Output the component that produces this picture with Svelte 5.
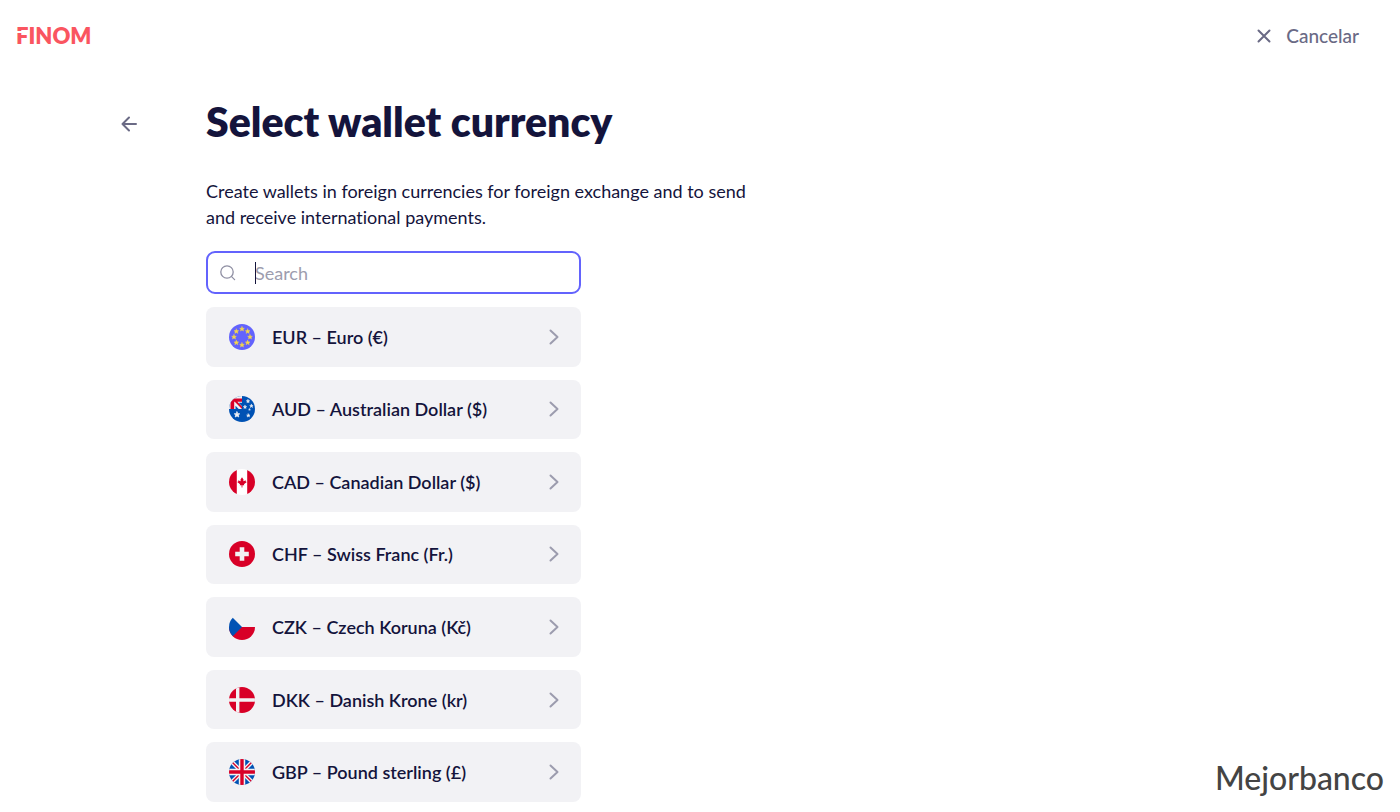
<script lang="ts">
	type Currency = { code: string; name: string; sign: string }

	const currencies: Currency[] = [
		{ code: 'EUR', name: 'Euro', sign: '€' },
		{ code: 'AUD', name: 'Australian Dollar', sign: '$' },
		{ code: 'CAD', name: 'Canadian Dollar', sign: '$' },
		{ code: 'CHF', name: 'Swiss Franc', sign: 'Fr.' },
		{ code: 'CZK', name: 'Czech Koruna', sign: 'Kč' },
		{ code: 'DKK', name: 'Danish Krone', sign: 'kr' },
		{ code: 'GBP', name: 'Pound sterling', sign: '£' }
	]

	const star = '0,-1.7 0.5,-0.6 1.7,-0.5 0.8,0.3 1.1,1.5 0,0.8 -1.1,1.5 -0.8,0.3 -1.7,-0.5 -0.5,-0.6'

	let search = $state('')

	let filtered = $derived(
		currencies.filter((c) => `${c.code} ${c.name}`.toLowerCase().includes(search.toLowerCase()))
	)
</script>

<div class="page">
	<header>
		<a class="logo" href="/">FINOM</a>
		<button class="cancel">
			<svg width="14" height="14" viewBox="0 0 14 14">
				<path d="M1.5 1.5l11 11M12.5 1.5l-11 11" />
			</svg>
			Cancelar
		</button>
	</header>

	<main>
		<button class="back" aria-label="Back">
			<svg width="16" height="16" viewBox="0 0 16 16">
				<path d="M15 8H1.5M8 1.5L1.5 8L8 14.5" />
			</svg>
		</button>

		<div class="content">
			<h1>Select wallet currency</h1>
			<p>Create wallets in foreign currencies for foreign exchange and to send and receive international payments.</p>

			<label class="search">
				<svg width="16" height="16" viewBox="0 0 16 16">
					<circle cx="7" cy="7" r="6.2" />
					<path d="M11.6 11.6l3 3" />
				</svg>
				<input type="text" placeholder="Search" aria-label="Search" bind:value={search} />
				{#if !search}
					<span class="caret"></span>
				{/if}
			</label>

			<ul>
				{#each filtered as currency (currency.code)}
					<li>
						<button class="currency">
							<svg class="flag" width="26" height="26" viewBox="0 0 26 26">
								{#if currency.code === 'EUR'}
									<rect width="26" height="26" fill="#6363fd" />
									{#each [0, 45, 90, 135, 180, 225, 270, 315] as angle}
										<g transform="rotate({angle} 13 13) translate(13 5) rotate({-angle}) scale(1.4)">
											<polygon points={star} fill="#f8d84a" stroke="#f8d84a" stroke-width=".3" />
										</g>
									{/each}
								{:else if currency.code === 'AUD'}
									<rect width="26" height="26" fill="#0052b4" />
									<path d="M0 0h13v13H0z" fill="#f2f2f4" />
									<path d="M1.5 13V2.5H13v3.2H5.2V13zM5 5h2.6l5.4 5.6V13z" fill="#d80027" />
									<path d="M9.6 6.8H13v3.4z" fill="#0052b4" />
									<path d="M6.5 9.8V13h3.2z" fill="#0052b4" />
									<g fill="#f2f2f4" stroke="#f2f2f4" stroke-width=".5">
										<g transform="translate(8 18.6) scale(1.6)"><polygon points={star} /></g>
										<g transform="translate(19 5.2)"><polygon points={star} /></g>
										<g transform="translate(16 11)"><polygon points={star} /></g>
										<g transform="translate(22.4 10)"><polygon points={star} /></g>
										<g transform="translate(20.5 13.6) scale(.6)"><polygon points={star} /></g>
										<g transform="translate(19.3 19.5)"><polygon points={star} /></g>
									</g>
								{:else if currency.code === 'CAD'}
									<rect width="26" height="26" fill="#fff" />
									<path d="M0 0h7.8v26H0zM18.2 0H26v26h-7.8z" fill="#d80027" />
									<path
										d="M13 8.3l1.6 2.4-.4 1.6 1.6-.5.9-.6v1.3l1.1.5-2.9 2.3.4.9h-1.9V18.4h-.8v-2.2h-1.9l.4-.9-2.9-2.3 1.1-.5v-1.3l.9.6 1.6.5-.4-1.6z"
										fill="#d80027"
									/>
								{:else if currency.code === 'CHF'}
									<rect width="26" height="26" fill="#d80027" />
									<path d="M10.7 6.2h4.6v4.5h4.5v4.6h-4.5v4.5h-4.6v-4.5H6.2v-4.6h4.5z" fill="#f2f2f4" />
								{:else if currency.code === 'CZK'}
									<rect width="26" height="13" fill="#f2f2f4" />
									<rect y="13" width="26" height="13" fill="#d80027" />
									<path d="M0 0L13 13L0 26z" fill="#0052b4" />
								{:else if currency.code === 'DKK'}
									<rect width="26" height="26" fill="#d80027" />
									<path d="M7 0h3.4v11.3H26v3.4H10.4V26H7V14.7H0v-3.4h7z" fill="#f2f2f4" />
								{:else}
									<rect width="26" height="26" fill="#0052b4" />
									<path d="M2 2l22 22M24 2L2 24" stroke="#f2f2f4" stroke-width="4" />
									<path d="M2 2l22 22M24 2L2 24" stroke="#d80027" stroke-width="1.4" />
									<path d="M13 0v26M0 13h26" stroke="#f2f2f4" stroke-width="6.4" />
									<path d="M13 0v26M0 13h26" stroke="#d80027" stroke-width="3.4" />
								{/if}
							</svg>
							<span class="name">{currency.code} – {currency.name} ({currency.sign})</span>
							<svg class="chevron" width="10" height="16" viewBox="0 0 10 16">
								<path d="M1.5 1.5L8.5 8L1.5 14.5" />
							</svg>
						</button>
					</li>
				{/each}
			</ul>
		</div>
	</main>

	<div class="watermark">Mejorbanco</div>
</div>

<style>
	:global(body) {
		background: #fff;
	}

	.page {
		box-sizing: border-box;
		min-height: 100vh;
		display: flex;
		flex-direction: column;
		padding-bottom: 10px;
		font-family: Lato, 'Liberation Sans', sans-serif;
		font-size: 18px;
		font-variant-ligatures: none;
		line-height: 26px;
		color: #14143c;
	}

	button {
		padding: 0;
		border: 0;
		background: none;
		font: inherit;
		color: inherit;
		cursor: pointer;
	}

	svg {
		flex: none;
		fill: none;
		stroke-linecap: round;
		stroke-linejoin: round;
	}

	header {
		display: flex;
		justify-content: space-between;
		align-items: center;
		height: 72px;
		padding: 0 41px 0 16px;
	}

	.logo {
		position: relative;
		font-size: 22px;
		font-weight: 800;
		color: #fa5560;
		text-decoration: none;
	}

	/* stencil cut under the top bar of the F */
	.logo::after {
		content: '';
		position: absolute;
		top: 8px;
		left: 0;
		width: 13px;
		height: 2px;
		background: #fff;
	}

	.cancel {
		display: flex;
		align-items: center;
		gap: 15px;
		font-size: 19px;
		font-weight: 500;
		color: #6a6a85;
	}

	.cancel svg,
	.back svg {
		stroke: #6a6a85;
		stroke-width: 2;
	}

	main {
		flex: 1;
		display: flex;
		padding: 24px 24px 0 121px;
	}

	.back {
		display: flex;
		align-self: flex-start;
		margin-top: 20px;
	}

	.content {
		display: flex;
		flex-direction: column;
		flex: 1;
		max-width: 560px;
		margin-left: 69px;
	}

	h1 {
		margin: 0;
		font-size: 41px;
		font-weight: 800;
		line-height: 52px;
	}

	p {
		margin: 30px 0 21px;
	}

	.search {
		position: relative;
		display: flex;
		align-items: center;
		gap: 19px;
		box-sizing: border-box;
		width: 100%;
		max-width: 375px;
		height: 43px;
		padding: 0 12px;
		border: 2px solid #6363fd;
		border-radius: 9px;
	}

	.search svg {
		stroke: #8f8fa3;
		stroke-width: 1.3;
	}

	input {
		flex: 1;
		min-width: 0;
		padding: 0;
		border: 0;
		outline: none;
		background: none;
		font: inherit;
		color: inherit;
	}

	input::placeholder {
		color: #9d9dae;
		opacity: 1;
	}

	.caret {
		position: absolute;
		top: 9px;
		left: 47px;
		width: 1px;
		height: 22px;
		background: #14143c;
	}

	ul {
		flex: 1;
		display: grid;
		grid-auto-rows: 1fr;
		gap: 13px;
		max-width: 375px;
		margin: 13px 0 0;
		padding: 0;
		list-style: none;
	}

	li {
		display: flex;
	}

	.currency {
		flex: 1;
		display: flex;
		align-items: center;
		gap: 17px;
		padding: 0 22px 0 23px;
		border-radius: 8px;
		background: #f2f2f5;
		font-weight: 600;
		text-align: left;
	}

	.flag {
		border-radius: 50%;
	}

	.flag path {
		stroke-linecap: butt;
	}

	.name {
		flex: 1;
	}

	.chevron {
		stroke: #9c9cae;
		stroke-width: 2;
	}

	.watermark {
		position: absolute;
		right: 16px;
		bottom: 16px;
		font-size: 32px;
		font-weight: 500;
		line-height: 36px;
		color: #444;
	}
</style>
